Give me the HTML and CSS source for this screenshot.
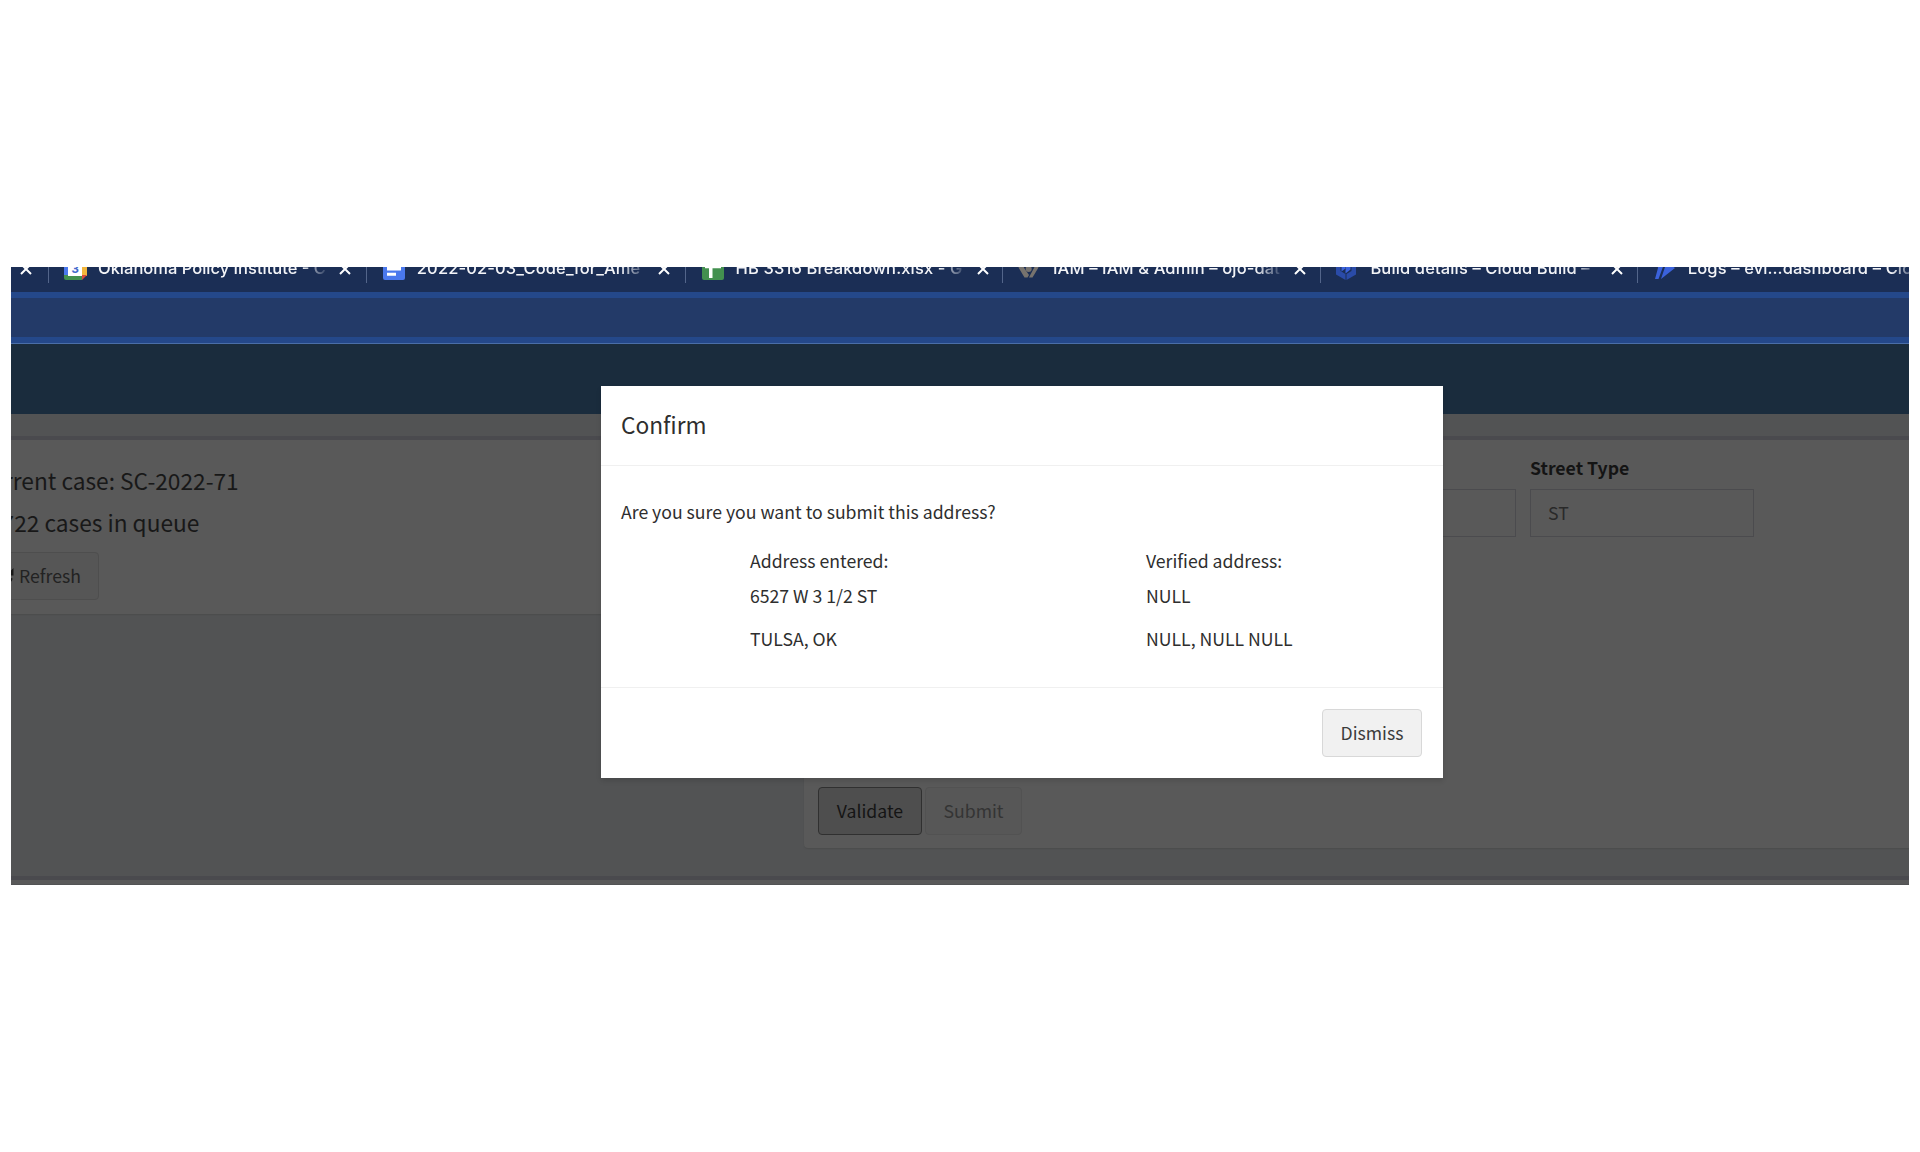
FILE: index.html
```html
<!DOCTYPE html>
<html lang="en">
<head>
<meta charset="utf-8">
<title>Confirm address</title>
<link rel="stylesheet" href="styles.css">
</head>
<body>
<main class="window">
  <div class="tabs">
    <div class="tab tab-first"><svg class="close" viewBox="0 0 12 12"><path d="M1 1l10 10M11 1L1 11"/></svg></div>
    <div class="tab tab-wide">
      <svg class="favicon" viewBox="0 0 23 23"><path fill="#4a78ed" d="M0 2q0-2 2-2h17v19H0z"/><path fill="#f2b63c" d="M18 0h3q2 0 2 2v17h-5z"/><path fill="#43904f" d="M0 18h18v5H2q-2 0-2-2z"/><path fill="#d94b3d" d="M18 18h5l-5 5z"/><path fill="#fff" d="M4 4h14v15H4z"/><text x="11.3" y="16.300" text-anchor="middle" class="cal">3</text></svg>
      <span class="title title-tight">Oklahoma Policy Institute - C</span>
      <svg class="close" viewBox="0 0 12 12"><path d="M1 1l10 10M11 1L1 11"/></svg>
    </div>
    <div class="tab tab-wide">
      <svg class="favicon" viewBox="0 0 23 23"><rect width="22" height="23" rx="2" fill="#4a78ed"/><path fill="#fff" d="M4 4h14v9.500H4zM4 15.800h9v3H4z"/></svg>
      <span class="title">2022-02-03_Code_for_Ame</span>
      <svg class="close" viewBox="0 0 12 12"><path d="M1 1l10 10M11 1L1 11"/></svg>
    </div>
    <div class="tab">
      <svg class="favicon" viewBox="0 0 23 23"><rect width="22" height="23" rx="2" fill="#43904f"/><path fill="#fff" d="M3 8h16v3.300h-8.500v9.700h-3.500v-9.700H3z"/></svg>
      <span class="title">HB 3316 Breakdown.xlsx - G</span>
      <svg class="close" viewBox="0 0 12 12"><path d="M1 1l10 10M11 1L1 11"/></svg>
    </div>
    <div class="tab">
      <svg class="favicon" viewBox="0 0 23 23"><path fill="#77736e" d="M4.500 3h4L4.800 10.500l5.200 7.500-1.500 2.500H5.500L-.5 10.500zM15 3l4.500 7.500-6 10h-3.500l1.500-3 3.800-7z"/><circle cx="9.700" cy="12" r="3" fill="#77736e"/></svg>
      <span class="title">IAM – IAM &amp; Admin – ojo-dat</span>
      <svg class="close" viewBox="0 0 12 12"><path d="M1 1l10 10M11 1L1 11"/></svg>
    </div>
    <div class="tab">
      <svg class="favicon" viewBox="0 0 23 23"><path fill="#2a4ba8" d="M0 6l4.500-2v10l5 3v6L0 17.500zM20 6l-4.500-2v10l-5 3v6l9.500-5.500z"/><path fill="#3b62dc" d="M5.500 9l4-3v5.500l-4 3zM10.500 6l4-2v8.500l-5 4v-3z"/></svg>
      <span class="title">Build details – Cloud Build – </span>
      <svg class="close" viewBox="0 0 12 12"><path d="M1 1l10 10M11 1L1 11"/></svg>
    </div>
    <div class="tab tab-last">
      <svg class="favicon" viewBox="0 0 23 23"><path fill="#3b62dc" d="M3 4l7 3-5.500 15H1L4 11zM11 4l10 7-14 11 4-12z"/></svg>
      <span class="title">Logs – evi…dashboard – Clo</span>
    </div>
  </div>
  <div class="toolbar"></div>
  <header class="navbar"></header>
  <section class="content">
    <div class="box case-box">
      <p class="lead">Current case: SC-2022-71</p>
      <p class="lead queue">1722 cases in queue</p>
      <button class="btn refresh"><svg class="refresh-icon" viewBox="0 0 16 16"><path fill="none" stroke="#181818" stroke-width="2.500" d="M13.500 9.500A6 6 0 0 1 3 12M2.500 6.500A6 6 0 0 1 13 4"/><path fill="#181818" d="M15.500 0v7h-7zM.5 16V9h7z"/></svg>Refresh</button>
    </div>
    <div class="box form-box">
      <div class="fields">
        <div class="input name-input"></div>
        <label class="field"><span class="label">Street Type</span><span class="input">ST</span></label>
      </div>
      <div class="actions"><button class="btn validate">Validate</button><button class="btn submit">Submit</button></div>
    </div>
  </section>
  <div class="next-box"></div>
  <div class="modal">
    <h4 class="modal-header">Confirm</h4>
    <div class="modal-body">
      <p class="question">Are you sure you want to submit this address?</p>
      <div class="addresses">
        <div class="address"><p>Address entered:</p><p>6527 W 3 1/2 ST</p><p class="city">TULSA, OK</p></div>
        <div class="address"><p>Verified address:</p><p>NULL</p><p class="city">NULL, NULL NULL</p></div>
      </div>
    </div>
    <div class="modal-footer"><button class="btn dismiss">Dismiss</button></div>
  </div>
</main>
</body>
</html>
```
FILE: styles.css
```css
* { box-sizing: border-box; }
body { margin: 0; background: #fff; color: #2e2e2e; font: 17.650px/26px "Noto Sans CJK SC", "Noto Sans", sans-serif; }
p, h4 { margin: 0; }
button { font: inherit; }
.window { position: relative; width: 1898px; height: 618px; margin: 267px 0 0 11px; overflow: hidden; background: #525354; }
.tabs { display: flex; height: 25px; overflow: hidden; background: #1b2e55; font: 500 16.500px/20px Inter, sans-serif; letter-spacing: .13px; color: #f4f5f8; }
.tab { display: flex; flex: 0 0 317.400px; height: 26px; margin-top: -10px; padding-left: 15.500px; border-left: 1px solid #53658a; }
.tab-wide { flex-basis: 318.800px; }
.tab-first { flex-basis: 36.500px; padding-left: 9px; border: 0; }
.tab-last { flex: 1; }
.favicon { flex: none; width: 23px; height: 23px; margin: 0 11px 0 0; overflow: visible; }
.title { flex: 0 0 231px; height: 24px; padding-top: 1px; overflow: hidden; white-space: pre; mask-image: linear-gradient(90deg, #000 203px, transparent 231px); }
.title-tight { letter-spacing: 0; }
.tab-last .title { flex-basis: 222px; }
.cal { font: 700 13px Roboto, sans-serif; fill: #4068cc; }
.close { flex: none; width: 12px; height: 12px; margin: 6px 0 0 10px; fill: none; stroke: #fff; stroke-width: 2; }
.tab-first .close { margin-left: 0; }
.toolbar { height: 51px; background: #233a68; border: solid #24488a; border-width: 6px 0; }
.navbar { height: 71px; background: #1a2c3d; border-top: 1px solid #4a6ea8; }
.content { display: flex; align-items: flex-start; justify-content: space-between; height: 463px; padding-top: 22px; }
.box { border-top: 4px solid #4a4a4e; background: #595959; box-shadow: 0 1px 1px #4c4d4d; }
.case-box { width: 776px; height: 178px; padding: 20px 0 0; border-radius: 0 4px 4px 0; color: #181818; }
.lead { height: 42px; font-size: 22.700px; line-height: 42px; margin-left: -35px; white-space: nowrap; }
.queue { margin-left: -22px; }
.btn { height: 48px; padding: 0; border: 1px solid #4e4e4e; border-radius: 4px; background: #565656; color: #222; }
.refresh { display: flex; align-items: center; width: 128px; margin: 8px 0 0 -40px; padding-left: 25px; }
.refresh-icon { width: 17px; height: 17px; margin-right: 5px; flex: none; }
.form-box { width: 1105px; height: 412px; border-radius: 4px 0 0 4px; display: flex; flex-direction: column; justify-content: space-between; padding: 13px 0 13px 14px; }
.fields { display: flex; gap: 14px; align-items: flex-end; }
.name-input { width: 698px; }
.label { display: block; height: 36px; padding-top: 2px; font-weight: 700; color: #141414; }
.input { display: flex; align-items: center; height: 48px; border: 1.500px solid #4b4b4e; padding: 0 0 1px 17px; color: #292929; }
.field { width: 224px; }
.actions { display: flex; gap: 3px; }
.validate { width: 104px; background: #4e4e4e; border-color: #303030; color: #151515; }
.submit { width: 97px; background: #575757; border-color: #525252; color: #343434; }
.next-box { height: 8px; margin-top: -1px; border-top: 4px solid #4a4a4e; background: #595959; }
.modal { position: absolute; left: 590px; top: 119px; width: 842px; height: 392px; background: #fff; box-shadow: 0 3px 5px rgba(0,0,0,.12); }
.modal-header { height: 80px; padding: 20px; border-bottom: 1px solid #f0f0f0; font-size: 22.700px; font-weight: 400; line-height: 38px; }
.modal-body { height: 221px; padding: 33px 20px 0; }
.question { height: 49px; }
.addresses { display: grid; grid-template-columns: 396px 1fr; padding-left: 129px; }
.address p { height: 35px; }
.address .city { margin-top: 8px; }
.modal-footer { display: flex; justify-content: flex-end; padding: 21px 21px 0; border-top: 1px solid #f0f0f0; }
.dismiss { width: 100px; border-color: #d8d8d8; background: #f1f1f1; color: #3c3c3c; }
```
